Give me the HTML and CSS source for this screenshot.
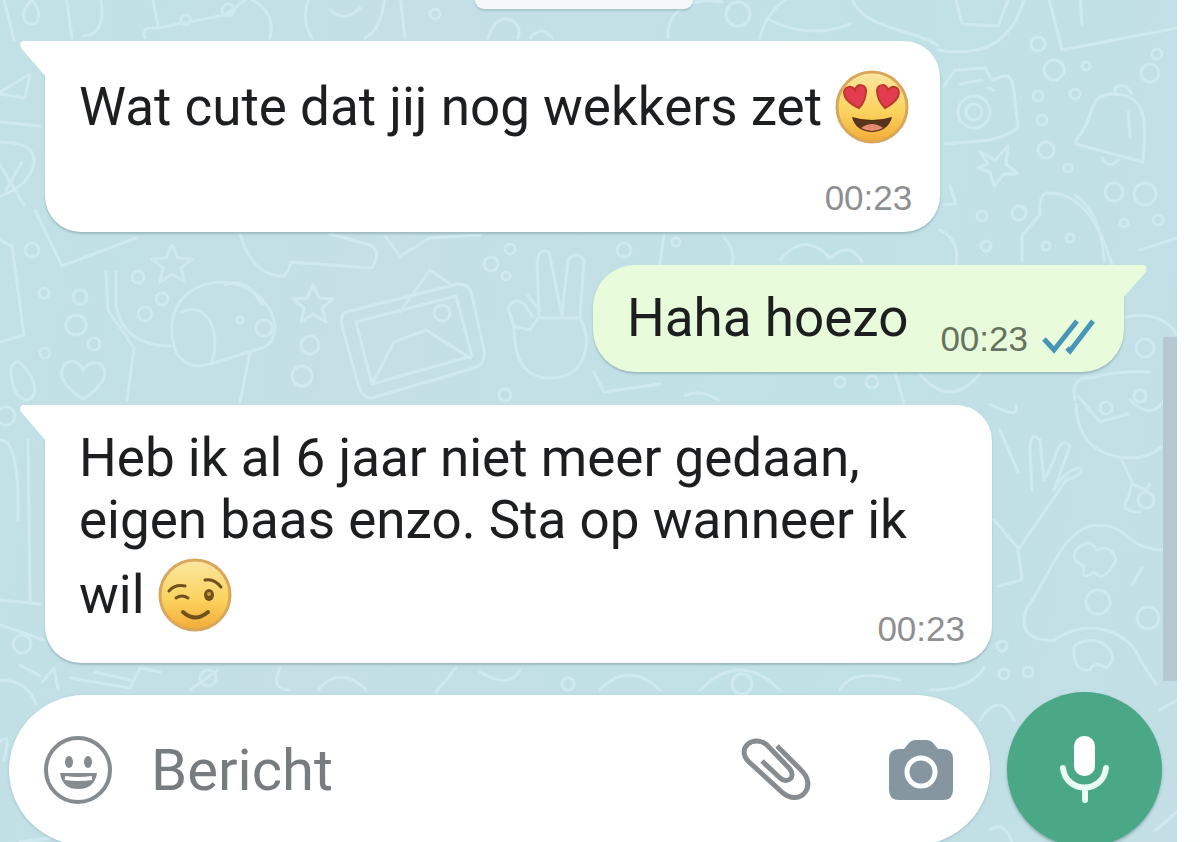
FILE: index.html
```html
<!DOCTYPE html>
<html lang="nl">
<head>
  <meta charset="UTF-8" />
  <meta name="viewport" content="width=device-width, initial-scale=1.0"/>
  <title>Chat</title>
  <link rel="stylesheet" href="styles.css">
</head>
<body>

  <main class="chat">
    <svg class="wallpaper" viewBox="0 0 1177 842" preserveAspectRatio="xMidYMin slice" aria-hidden="true">
      <defs>
        <g id="star"><path d="M0-19 6-6 20-5 9 4 13 18 0 10-12 18-9 4-20-5-6-6Z"/></g>
        <g id="heart"><path d="M0 19C-14 10-26-3-20-13-14-23-3-18 0-10 5-18 17-21 21-11 25-1 12 12 0 19Z"/></g>
      </defs>
      <!-- top edge -->
      <path d="M3-5 14 40M32 0C18 12 24 24 32 24S42 12 32 0M66-5 72 38M100-5Q108 34 84 36M152-5 158 26M145 38Q140 26 158 28L225 15 252-5M252 0Q276 12 270 38M310-5Q300 20 312 38M385-5Q382 30 365 38M400-5 405 38M330 10Q345 24 360 8"/>
      <path d="M488 38Q496 14 512 20 522 28 518 38M530 38Q542 24 552 38M668 38C666 12 690-4 722 2M760 38Q765 12 792-5M770 20Q810 40 850 24M850-5C862 30 910 28 938 45M938 50Q1010 62 1025-5M955-5 962 24 998 26 1010-5M1048-5 1062 50 1177 28M1080-5 1082 25"/>
      <!-- left side -->
      <path d="M0 92 30 74 25 98 0 94M0 122 40 126M0 142Q42 142 32 170 24 188 0 196M0 165 24 205M22 162 6 190M35 210 62 266 136 238M0 240 12 246 24 335 0 342M12 380C8 368 14 362 18 362S38 382 34 394 14 398 12 380Z"/>
      <path d="M106 272 108 310 134 348 127 400M116 272V305Q122 345 170 346M172 330C170 290 215 270 250 290 276 304 284 340 262 348L210 364C180 372 172 350 172 330ZM182 312C205 300 222 330 212 362M250 352 240 402M225 285Q245 276 262 304M240 234Q252 276 284 276 292 266 290 262L372 268Q382 250 370 245L330 234"/>
      <!-- photo and hand -->
      <path d="M346 312 458 284Q470 284 472 296L484 350Q486 364 474 368L372 398Q362 398 358 384L342 326Q340 314 346 312ZM356 322 456 296 472 356 372 384ZM372 384 394 342 426 330 470 358M400 312 430 270 450 284M385 236 400 256 430 238 480 235"/>
      <path d="M539 318 537 262Q538 248 549 252L562 316 568 260Q576 250 584 260L580 318C594 345 584 376 554 378 522 380 514 356 514 326L530 330 538 318 580 318M514 326 508 308Q514 296 524 304L532 316M528 296 540 310"/>
      <path d="M660 265 664 234M732 265Q736 250 724 238M594 372 604 392 660 384M685 396Q700 388 718 400M780 260Q805 230 830 258 850 240 862 262M895 372 904 404M920 374Q950 410 980 374"/>
      <!-- camera, bell, hat -->
      <path d="M944 86 955 70 985 68 992 80 1004 76Q1012 74 1014 92L1018 126Q1014 134 990 140L945 144M960 84 982 80M988 88 994 90M1076 140C1098 116 1084 96 1112 94 1148 94 1146 120 1143 162L1076 144ZM1102 158Q1110 170 1118 160M1116 94Q1112 84 1126 86L1132 94M1128 112 1130 138"/>
      <path d="M1022 260V235L1040 215Q1038 196 1046 193 1090 190 1112 265M1075 195Q1102 214 1104 262M980 152 995 160 1008 146 1006 164 1018 174 1004 174 994 186 990 172 978 168 988 164ZM1140 250 1177 238M950 186 956 204 944 205M940 230Q960 240 956 265M1120 318Q1160 308 1177 335"/>
      <!-- right side -->
      <path d="M1075 400Q1070 376 1092 378 1120 370 1150 372M1076 404Q1078 456 1130 458 1150 458 1162 446M1078 396 1100 422 1128 414M1130 400Q1150 420 1163 402M1122 460 1132 482M1140 512Q1118 512 1128 498L1132 484 1146 490 1150 484M994 520 1018 548 1022 580 998 586M1018 550 1066 480Q1086 474 1080 468 1064 470 1054 490L1070 446Q1060 436 1054 460L1044 480 1040 440Q1030 430 1030 450L1032 490"/>
      <path d="M1163 550C1120 548 1130 520 1090 526 1060 534 1046 584 1028 606 1016 632 1034 642 1054 640 1090 616 1130 632 1140 660L1156 684M1076 550Q1090 536 1096 550 1112 544 1116 560 1104 584 1094 572 1080 582 1084 566 1070 560 1076 550ZM1132 585 1142 568M1074 646Q1090 636 1104 644 1120 658 1106 668 1094 660 1090 670 1072 672 1074 646ZM990 404Q1020 420 1016 406M1000 430 1018 472"/>
      <!-- strips around the composer -->
      <path d="M0 440Q20 440 18 520M28 440 30 600M0 600 40 604M0 625 44 640M0 680Q28 680 36 704M20 665 40 676M0 742Q12 730 4 760M20 842 50 838M42 682 54 668 58 690M70 678 130 688 140 668 160 672M95 672 130 680M190 690 218 670M280 668Q270 690 290 690M318 690Q340 664 366 690M436 692 456 668M480 672Q510 690 520 670M600 690Q628 660 660 690M700 690Q740 650 780 690M840 690Q850 668 900 680M930 690Q970 690 984 668M980 720Q1000 690 1014 720M990 830Q1004 820 1012 842M1160 710 1177 700M1156 830 1177 812"/>
      <use href="#star" x="172" y="264"/><use href="#star" x="313" y="304"/><use href="#heart" x="83" y="380"/>
      <g>
        <circle cx="32" cy="250" r="7"/><circle cx="44" cy="293" r="5"/><circle cx="80" cy="297" r="7"/><circle cx="76" cy="325" r="10"/><circle cx="94" cy="344" r="6"/><circle cx="45" cy="353" r="5"/><circle cx="138" cy="277" r="6"/><circle cx="162" cy="299" r="6"/><circle cx="145" cy="314" r="7"/><circle cx="240" cy="320" r="3"/><circle cx="264" cy="328" r="8"/><circle cx="310" cy="345" r="9"/><circle cx="302" cy="376" r="10"/><circle cx="442" cy="313" r="8"/><circle cx="491" cy="264" r="7"/><circle cx="510" cy="249" r="5"/><circle cx="506" cy="276" r="4"/><circle cx="624" cy="250" r="7"/><circle cx="676" cy="242" r="4"/><circle cx="505" cy="395" r="6"/>
        <circle cx="974" cy="112" r="16"/><circle cx="974" cy="112" r="8"/><circle cx="1038" cy="44" r="7"/><circle cx="1054" cy="70" r="10"/><circle cx="1086" cy="66" r="4"/><circle cx="1150" cy="73" r="9"/><circle cx="1157" cy="54" r="5"/><circle cx="1038" cy="96" r="5"/><circle cx="1075" cy="94" r="5"/><circle cx="1042" cy="120" r="5"/><circle cx="1046" cy="150" r="8"/><circle cx="1068" cy="168" r="4"/><circle cx="1114" cy="192" r="9"/><circle cx="1145" cy="194" r="11"/><circle cx="1124" cy="223" r="4"/><circle cx="1158" cy="220" r="5"/><circle cx="1019" cy="213" r="7"/><circle cx="982" cy="216" r="5"/><circle cx="986" cy="246" r="5"/><circle cx="1046" cy="246" r="4"/><circle cx="1070" cy="238" r="4"/><circle cx="1145" cy="348" r="9"/>
        <circle cx="1106" cy="408" r="6"/><circle cx="1140" cy="396" r="6"/><circle cx="1098" cy="602" r="12"/><circle cx="1148" cy="618" r="11"/><circle cx="1002" cy="646" r="5"/><circle cx="1004" cy="674" r="5"/><circle cx="1028" cy="672" r="5"/><circle cx="22" cy="644" r="9"/><circle cx="6" cy="416" r="9"/><circle cx="1146" cy="500" r="8"/><circle cx="208" cy="678" r="8"/><circle cx="742" cy="684" r="10"/><circle cx="568" cy="684" r="6"/><circle cx="186" cy="20" r="5"/><circle cx="228" cy="10" r="6"/><circle cx="435" cy="14" r="5"/><circle cx="738" cy="14" r="12"/><circle cx="840" cy="382" r="5"/><circle cx="872" cy="382" r="6"/>
      </g>
    </svg>

    <div class="date-pill"></div>

    <section class="messages">
      <article class="bubble received">
        <svg class="tail" viewBox="0 0 26 36" aria-hidden="true"><path d="M26 0H4C0 0-1 4 2 8L26 36Z"/></svg>
        <p>Wat cute dat jij nog wekkers zet <svg class="emoji" viewBox="0 0 74 74" role="img" aria-label="verliefd">
            <defs>
              <linearGradient id="skin" x1="0" y1="0" x2="0" y2="1">
                <stop offset="0" stop-color="#fbe7a2"/>
                <stop offset="0.55" stop-color="#fbd45f"/>
                <stop offset="1" stop-color="#f2ab37"/>
              </linearGradient>
            </defs>
            <circle cx="37" cy="37" r="35" fill="url(#skin)" stroke="#d9a75c" stroke-width="3"/>
            <path d="M24 38C15 34 9 28 9 22 10 16 17 15 20 20 22 13 30 14 31 20 31 28 28 34 24 38Z" fill="#e33c50" stroke="#bd382e" stroke-width="2"/>
            <path d="M50 38C46 34 42 28 42 20 43 14 51 13 53 20 57 15 63 16 64 22 64 28 58 34 50 38Z" fill="#e33c50" stroke="#bd382e" stroke-width="2"/>
            <path d="M17 47Q37 53 57 47C55 57 46 62 37 62S19 57 17 47Z" fill="#57331a"/>
            <path d="M26 58Q37 50 48 58 37 64 26 58Z" fill="#e58a70"/>
          </svg></p>
        <time class="below">00:23</time>
      </article>

      <article class="bubble sent">
        <svg class="tail" viewBox="0 0 26 36" aria-hidden="true"><path d="M0 0H21C25 0 26 4 23 8L8 25Q1 32 0 36Z"/></svg>
        <p>Haha hoezo</p>
        <div class="meta">
          <time>00:23</time>
          <svg class="ticks" viewBox="0 0 54 36" role="img" aria-label="gelezen">
            <path d="M2 20 12 31 35 2M25 29 28 32 51 2"/>
          </svg>
        </div>
      </article>

      <article class="bubble received long">
        <svg class="tail" viewBox="0 0 26 36" aria-hidden="true"><path d="M26 0H4C0 0-1 4 2 8L26 36Z"/></svg>
        <p>Heb ik al 6 jaar niet meer gedaan, eigen baas enzo. Sta op wanneer ik wil <svg class="emoji" viewBox="0 0 74 74" role="img" aria-label="knipoog">
            <circle cx="37" cy="37" r="35" fill="url(#skin)" stroke="#d9a75c" stroke-width="3"/>
            <g fill="none" stroke="#70501c" stroke-width="3" stroke-linecap="round">
              <path d="M11 33Q17 26 27 28M47 22Q56 20 63 29M18 40Q24 36 30 40"/>
              <path d="M25 54Q37 65 50 54" stroke-width="4"/>
            </g>
            <ellipse cx="51" cy="37" rx="5" ry="6" fill="#70501c"/>
            <circle cx="51" cy="36" r="2" fill="#c99d45"/>
          </svg><time class="corner">00:23</time></p>
      </article>
    </section>

    <form class="composer">
      <div class="field">
        <button type="button" aria-label="Emoji">
          <svg class="icon-smile" viewBox="0 0 70 70">
            <circle cx="35" cy="35" r="32" fill="none" stroke="#868b8f" stroke-width="4"/>
            <ellipse cx="26" cy="27" rx="4" ry="6"/><ellipse cx="45" cy="27" rx="4" ry="6"/>
            <path d="M17 38H54C52 50 45 54 35 54S19 50 17 38Z"/>
            <path d="M22 43Q35 45 49 43" fill="none" stroke="#fff" stroke-width="4"/>
          </svg>
        </button>
        <input type="text" placeholder="Bericht" aria-label="Bericht">
        <button type="button" aria-label="Bijlage">
          <svg class="icon-clip" viewBox="0 0 70 64">
            <path d="M36 7 60 31C77 47 59 68 42 54L8 23C-6 9 13-5 26 6L49 30C55 39 46 45 39 39L21 22" transform="translate(0 1)" fill="none" stroke="#868c8f" stroke-width="5"/>
          </svg>
        </button>
        <button type="button" aria-label="Camera">
          <svg class="icon-camera" viewBox="0 0 66 62">
            <path d="M20 5Q23 1 28 1H38Q43 1 46 5L50 10H55Q65 10 65 20V51Q65 61 55 61H11Q1 61 1 51V20Q1 10 11 10H16Z"/>
            <circle cx="33" cy="33" r="14" fill="none" stroke="#fff" stroke-width="5"/>
          </svg>
        </button>
      </div>
      <button type="button" class="mic" aria-label="Spraakbericht">
        <svg viewBox="0 0 50 68">
          <rect x="14" y="0" width="21" height="40" rx="10" fill="#fff"/>
          <path d="M3 32C6 58 43 58 46 32M25 52V64" fill="none" stroke="#e9fff6" stroke-width="6" stroke-linecap="round"/>
        </svg>
      </button>
    </form>

    <div class="scroll-thumb"></div>
  </main>

</body>
</html>
```
FILE: styles.css
```css
* {
  box-sizing: border-box;
}

body {
  margin: 0;
  padding-right: 23px;
  background: #fdfefe;
  font-family: Roboto, "Liberation Sans", sans-serif;
  color: #1c1e20;
  height: 100vh;
  overflow: hidden;
}

.chat {
  position: relative;
  display: flex;
  flex-direction: column;
  min-height: 100vh;
  background: linear-gradient(100deg, #c0e1e5, #c4dfe6, #bfe1e5, #c3dfe5);
}

.wallpaper {
  position: absolute;
  top: 0;
  left: 0;
  width: 100%;
  height: 100vh;
  fill: none;
  stroke: #cfe9f0;
  stroke-width: 3;
  stroke-linecap: round;
  stroke-linejoin: round;
}

.date-pill {
  position: relative;
  align-self: center;
  width: 218px;
  height: 9px;
  margin-right: 10px;
  background: #f3f7f8;
  border-radius: 0 0 18px 18px;
  box-shadow: 0 2px 2px rgba(90, 120, 130, 0.25);
}

.messages {
  position: relative;
  display: flex;
  flex-direction: column;
  gap: 33px;
  padding: 32px 53px 29px 45px;
}

.bubble {
  position: relative;
  align-self: flex-start;
  padding: 22px 34px;
  border-radius: 36px;
  background: #fff;
  box-shadow: 0 2px 2px rgba(90, 120, 130, 0.35);
}

.bubble p {
  margin: 0;
  font-size: 53px;
  line-height: 62px;
}

.received {
  padding-right: 31px;
  border-top-left-radius: 0;
}

.received .tail {
  left: -25px;
  fill: #fff;
}

.tail {
  position: absolute;
  top: 0;
  width: 26px;
  height: 36px;
}

.sent {
  align-self: flex-end;
  display: flex;
  align-items: flex-end;
  gap: 32px;
  padding: 22px 28px 23px 34px;
  background: #e8fcdb;
  border-radius: 42px;
  border-top-right-radius: 0;
}

.sent .tail {
  right: -24px;
  fill: #e8fcdb;
}

.emoji {
  width: 74px;
  height: 74px;
  margin-top: 7px;
  vertical-align: -19px;
}

time {
  font-family: "Liberation Sans", sans-serif;
  font-size: 35px;
  line-height: 40px;
  color: #8d8f91;
}

.below {
  display: block;
  margin: 34px -3px -8px;
  text-align: right;
}

.meta {
  display: flex;
  gap: 14px;
  height: 40px;
  margin-bottom: -10px;
}

.meta time {
  color: #66735f;
}

.ticks {
  width: 54px;
  height: 36px;
  fill: none;
  stroke: #4796b8;
  stroke-width: 5;
}

.long {
  width: 947px;
  max-width: 100%;
  padding-bottom: 31px;
}

.corner {
  float: right;
  margin: 58px -4px -20px 0;
}

.composer {
  position: relative;
  display: flex;
  align-items: center;
  gap: 17px;
  padding: 0 15px 0 9px;
}

.field {
  flex: 1;
  min-width: 0;
  display: flex;
  align-items: center;
  height: 150px;
  padding: 0 36px 0 34px;
  background: #fff;
  border-radius: 75px;
  box-shadow: 0 1px 3px rgba(90, 120, 130, 0.3);
}

.field input {
  flex: 1;
  min-width: 0;
  padding: 0;
  margin-left: 38px;
  border: none;
  outline: none;
  background: none;
  font-family: inherit;
  font-size: 58px;
  color: #1c1e20;
}

.field input::placeholder {
  color: #777c7f;
  opacity: 1;
}

button {
  display: flex;
  align-items: center;
  justify-content: center;
  padding: 0;
  border: none;
  background: none;
  cursor: pointer;
}

.icon-smile {
  width: 70px;
  height: 70px;
  fill: #868b8f;
}

.icon-clip {
  width: 70px;
  height: 64px;
}

.icon-camera {
  width: 66px;
  height: 62px;
  margin-left: 77px;
  fill: #8696a0;
}

.mic {
  flex: none;
  width: 155px;
  height: 155px;
  border-radius: 50%;
  background: #4aa886;
  box-shadow: 0 2px 3px rgba(60, 100, 100, 0.4);
}

.mic svg {
  width: 50px;
  height: 68px;
}

.scroll-thumb {
  position: absolute;
  right: 0;
  top: 40vh;
  width: 14px;
  height: 344px;
  background: #b3c8d2;
}
```
